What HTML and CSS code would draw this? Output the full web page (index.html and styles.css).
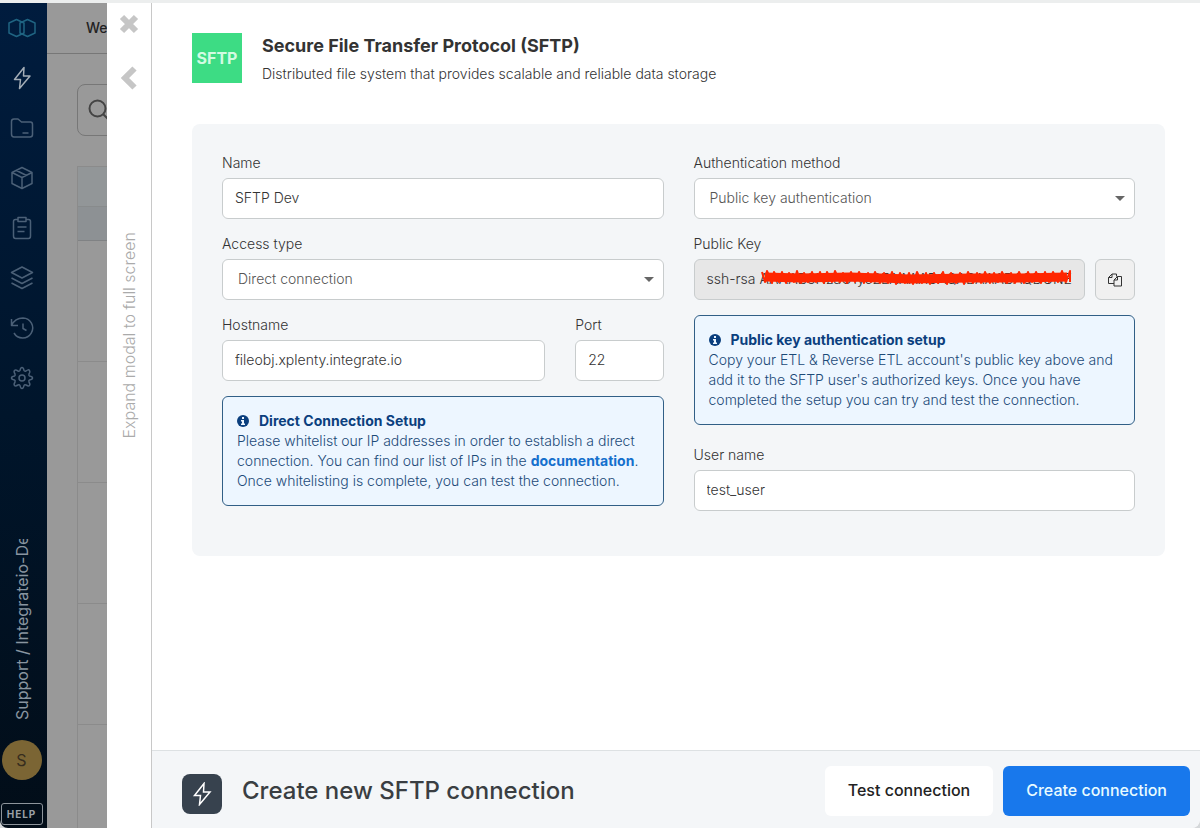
FILE: index.html
```html
<!DOCTYPE html>
<html lang="en">
<head>
  <meta charset="UTF-8">
  <meta name="viewport" content="width=device-width, initial-scale=1">
  <title>Create new SFTP connection</title>
  <link rel="stylesheet" href="styles.css">
</head>
<body>
<div class="window">
  <nav class="sidebar">
    <a href="#" class="logo" aria-label="Home">
      <svg width="28" height="20" viewBox="0 0 28 20"><path d="M8.500 1.500L16 5V15L8.500 18.500L1 15V5ZM19.500 1.500L27 5V15L19.500 18.500L12 15V5Z"/></svg>
    </a>
    <a href="#" class="active" aria-label="Connections">
      <svg width="24" height="24" viewBox="0 0 24 24"><path d="M14 1.500L4.500 13.500H10.500L9.500 22.500L20 10H13.500Z"/></svg>
    </a>
    <a href="#" aria-label="Files">
      <svg width="24" height="24" viewBox="0 0 24 24"><path d="M1.500 18V5.500Q1.500 3 4 3H8L11.500 6H20.500Q22.500 6 22.500 8.500V18.500Q22.500 21 20 21H4Q1.500 21 1.500 18ZM12.500 17H18.500"/></svg>
    </a>
    <a href="#" aria-label="Packages">
      <svg width="24" height="24" viewBox="0 0 24 24"><path d="M12 1.500L22 6.500V17.500L12 22.500L2 17.500V6.500ZM2 6.500L12 11.500L22 6.500M12 11.500V22.500M6.500 4.500L16.500 9.500"/></svg>
    </a>
    <a href="#" aria-label="Jobs">
      <svg width="24" height="24" viewBox="0 0 24 24"><path d="M8 3.500H5.500Q3.500 3.500 3.500 5.500V20Q3.500 22.500 5.500 22.500H18.500Q20.500 22.500 20.500 20V5.500Q20.500 3.500 18.500 3.500H16M8 1.500H16V5.500H8ZM7.500 11H16.500M7.500 15.500H14.500"/></svg>
    </a>
    <a href="#" aria-label="Layers">
      <svg width="24" height="24" viewBox="0 0 24 24"><path d="M12 1L22.500 6.500L12 12L1.500 6.500ZM1.500 12L12 17.500L22.500 12M1.500 17L12 22.500L22.500 17"/></svg>
    </a>
    <a href="#" aria-label="History">
      <svg width="24" height="24" viewBox="0 0 24 24"><path d="M1.500 3V9.500H8M1.500 9.500Q5 2 13 2A10 10 0 1 1 4 17M13 7.500V12.500L16.500 14.500"/></svg>
    </a>
    <a href="#" aria-label="Settings">
      <svg width="24" height="24" viewBox="0 0 24 24"><circle cx="12" cy="12" r="3"/><path d="M10 4.500Q10.500 1.500 12 1.500T14 4.500Q14.500 5.500 16 5Q18.500 3 19.500 4.500T19 8Q18.500 9.500 19.500 10Q22.500 10.500 22.500 12T19.500 14Q18.500 14.500 19 16Q20.500 18.500 19.500 19.500T16 19Q14.500 18.500 14 19.500Q13.500 22.500 12 22.500T10 19.500Q9.500 18.500 8 19Q5.500 20.500 4.500 19.500T5 16Q5.500 14.500 4.500 14Q1.500 13.500 1.500 12T4.500 10Q5.500 9.500 5 8Q3.500 5.500 4.500 4.500T8 5Q9.500 5.500 10 4.500Z"/></svg>
    </a>
    <div class="account">Support / Integrateio-Dev</div>
    <div class="avatar">S</div>
    <button class="help">HELP</button>
  </nav>

  <main class="page">
    <div class="page-header">Welcome</div>
    <div class="search">
      <svg width="24" height="24" viewBox="0 0 24 24"><circle cx="10.500" cy="10.500" r="8"/><path d="M16.500 16.500L22 22"/></svg>
    </div>
    <div class="list">
      <div class="list-head"></div>
      <div class="list-sub"></div>
      <div class="list-row"></div>
      <div class="list-row"></div>
      <div class="list-row"></div>
      <div class="list-row"></div>
      <div class="list-row"></div>
    </div>
  </main>

  <div class="modal" role="dialog" aria-labelledby="modal-title">
    <div class="modal-rail">
      <button class="icon-button" aria-label="Close">
        <svg width="20" height="20" viewBox="0 0 20 20"><path d="M3 3L17 17M17 3L3 17"/></svg>
      </button>
      <button class="icon-button back" aria-label="Back">
        <svg width="20" height="26" viewBox="0 0 20 26"><path d="M15.500 3.500L6 13L15.500 22.500"/></svg>
      </button>
      <button class="expand">Expand modal to full screen</button>
    </div>

    <div class="modal-main">
      <div class="modal-body">
        <header class="connector">
          <div class="connector-logo">SFTP</div>
          <div>
            <h1>Secure File Transfer Protocol (SFTP)</h1>
            <p>Distributed file system that provides scalable and reliable data storage</p>
          </div>
        </header>

        <form class="panel" id="connection-form">
          <div class="column">
            <div class="field">
              <label for="name">Name</label>
              <input id="name" type="text" value="SFTP Dev">
            </div>
            <div class="field">
              <label for="access">Access type</label>
              <select id="access"><option>Direct connection</option></select>
            </div>
            <div class="field-row">
              <div class="field host">
                <label for="host">Hostname</label>
                <input id="host" type="text" value="fileobj.xplenty.integrate.io">
              </div>
              <div class="field port">
                <label for="port">Port</label>
                <input id="port" type="text" value="22">
              </div>
            </div>
            <div class="info">
              <strong class="info-title">
                <svg width="12" height="12" viewBox="0 0 12 12"><circle cx="6" cy="6" r="6"/><path d="M5 2H7V4H5ZM4 5H7V8.500H8V10H4V8.500H5V6.500H4Z"/></svg>
                Direct Connection Setup
              </strong>
              Please whitelist our IP addresses in order to establish a direct connection. You can find our list of IPs in the <a href="#">documentation</a>. Once whitelisting is complete, you can test the connection.
            </div>
          </div>

          <div class="column">
            <div class="field">
              <label for="auth">Authentication method</label>
              <select id="auth"><option>Public key authentication</option></select>
            </div>
            <div class="field">
              <label for="key">Public Key</label>
              <div class="key-row">
                <div class="key-box">
                  <input id="key" type="text" readonly value="ssh-rsa AAAAB3NzaC1yc2EAAAADAQABAAABAQDUNEL">
                  <svg class="redaction" viewBox="0 0 312 20"><path class="thick" d="M5 9L40 10L90 9L150 11L210 10L260 10L307 9"/><path d="M2 4L5 14L7 3L12 15L14 4L19 14L22 4L26 15L29 5L34 14L37 3L41 15L44 5L48 14L52 4L56 14L60 4L64 15L67 4L72 14L75 3L80 14L83 5L87 15L91 4L95 14L99 4L104 15L108 5L111 14L115 4L120 15L124 5L128 15L132 4L136 16L140 5L145 15L149 5L153 16L157 4L162 15L166 5L170 16L174 5L178 15L183 4L187 16L191 5L196 15L200 5L204 16L208 4L213 15L217 5L221 15L225 4L230 15L234 5L238 14L242 4L247 15L251 5L255 15L259 4L264 15L268 4L272 14L276 4L281 15L285 4L289 14L293 4L298 14L302 3L306 14L310 3V14"/></svg>
                </div>
                <button type="button" class="copy" aria-label="Copy public key">
                  <svg width="16" height="16" viewBox="0 0 16 16"><path d="M7 11.500H1.500V5.500L5 2H9.500V4.500M5 2V5.500H1.500M7 14V8L10.500 4.500H14.500V14ZM10.500 4.500V8H7"/></svg>
                </button>
              </div>
            </div>
            <div class="info">
              <strong class="info-title">
                <svg width="12" height="12" viewBox="0 0 12 12"><circle cx="6" cy="6" r="6"/><path d="M5 2H7V4H5ZM4 5H7V8.500H8V10H4V8.500H5V6.500H4Z"/></svg>
                Public key authentication setup
              </strong>
              Copy your ETL &amp; Reverse ETL account's public key above and add it to the SFTP user's authorized keys. Once you have completed the setup you can try and test the connection.
            </div>
            <div class="field user">
              <label for="user">User name</label>
              <input id="user" type="text" value="test_user">
            </div>
          </div>
        </form>
      </div>

      <footer class="modal-footer">
        <div class="footer-icon">
          <svg width="24" height="24" viewBox="0 0 24 24"><path d="M14 1.500L4.500 13.500H10.500L9.500 22.500L20 10H13.500Z"/></svg>
        </div>
        <h2 id="modal-title">Create new SFTP connection</h2>
        <button type="button" class="btn">Test connection</button>
        <button type="submit" form="connection-form" class="btn primary">Create connection</button>
      </footer>
    </div>
  </div>
</div>
</body>
</html>
```

FILE: styles.css
```css
* {
  box-sizing: border-box;
}
body {
  margin: 0;
  background: #d5d8da;
  font-family: Inter, "Liberation Sans", sans-serif;
  font-size: 14px;
  font-weight: 300;
  line-height: 20px;
  color: #333;
}
button, input, select {
  font: inherit;
  color: inherit;
}
button {
  border: 0;
  padding: 0;
  background: none;
  cursor: pointer;
}
svg {
  display: block;
  fill: none;
  stroke: currentColor;
}
.window {
  position: relative;
  display: flex;
  height: 100vh;
  border-top: 3px solid #eceeee;
  border-radius: 0 0 8px 8px;
  overflow: hidden;
}

/* left navigation */
.sidebar {
  display: flex;
  flex-direction: column;
  align-items: center;
  width: 47px;
  padding: 0 4px 3px 0;
  background: linear-gradient(#001c3e, #00152b 50%, #020d18);
  color: #4b6077;
}
.sidebar a {
  display: flex;
  align-items: center;
  justify-content: center;
  flex: none;
  width: 43px;
  height: 50px;
  color: inherit;
}
.sidebar .logo {
  color: #1f6482;
}
.sidebar .active {
  color: #a3adb6;
}
.sidebar svg {
  stroke-width: 1.5;
  stroke-linejoin: round;
}
.account {
  height: 181px;
  margin-top: auto;
  writing-mode: vertical-rl;
  transform: rotate(180deg);
  overflow: hidden;
  white-space: nowrap;
  font-size: 16px;
  font-weight: 400;
  color: #8995a0;
}
.avatar {
  flex: none;
  width: 40px;
  margin: 20px 0 23px;
  border-radius: 50%;
  background: #7b6534;
  font-size: 16px;
  font-weight: 400;
  line-height: 40px;
  text-align: center;
  color: #362d1e;
}
.help {
  flex: none;
  width: 42px;
  height: 22px;
  border: 1px solid #8d949b;
  border-radius: 3px;
  font-size: 10px;
  font-weight: 700;
  letter-spacing: 1px;
  color: #9aa0a6;
}

/* dimmed page behind the modal */
.page {
  flex: 1;
  overflow: hidden;
  background: #999;
}
.page-header {
  height: 51px;
  padding-left: 39px;
  border-bottom: 1px solid #777;
  font-weight: 500;
  line-height: 50px;
  color: #222;
}
.search {
  display: flex;
  align-items: center;
  height: 52px;
  margin: 30px;
  padding-left: 9px;
  border: 1px solid #777;
  border-radius: 8px;
  color: #444;
}
.search svg {
  stroke-width: 2;
}
.list {
  margin: 0 30px;
  border: 1px solid #8b8b8b;
}
.list-head {
  height: 40px;
  background: #929698;
  border-bottom: 1px solid #888b8c;
}
.list-sub {
  height: 34px;
  background: #8d9194;
  border-bottom: 1px solid #808284;
}
.list-row {
  height: 121px;
  border-bottom: 1px solid #8b8b8b;
}

/* modal */
.modal {
  position: absolute;
  top: 0;
  right: 0;
  bottom: 0;
  left: 107px;
  display: flex;
  background: #fff;
}
.modal-rail {
  display: flex;
  flex-direction: column;
  align-items: center;
  width: 45px;
  padding-top: 11px;
  border-right: 1px solid #c8c8c8;
  color: #c6c6c6;
}
.icon-button svg {
  stroke-width: 6;
}
.back {
  margin-top: 31px;
}
.expand {
  margin-top: 141px;
  writing-mode: vertical-rl;
  transform: rotate(180deg);
  font-size: 16px;
  color: #aaa;
}
.modal-main {
  display: flex;
  flex: 1;
  flex-direction: column;
}
.modal-body {
  flex: 1;
  padding: 30px 35px 30px 40px;
}
.connector {
  display: flex;
  align-items: flex-start;
  gap: 20px;
  margin-bottom: 40px;
}
.connector-logo {
  width: 50px;
  background: #3ddc84;
  font-size: 16px;
  font-weight: 700;
  line-height: 50px;
  text-align: center;
  color: #d2fbe2;
}
h1, h2, p {
  margin: 0;
}
h1 {
  font-size: 18px;
  font-weight: 700;
  line-height: 26px;
}
.connector p {
  margin-top: 5px;
}
.panel {
  display: grid;
  grid-template-columns: 1fr 1fr;
  gap: 30px;
  padding: 29px 30px 45px;
  border-radius: 8px;
  background: #f4f6f8;
}
.column {
  display: flex;
  flex-direction: column;
  gap: 15px;
}
.field {
  display: flex;
  flex-direction: column;
  gap: 5px;
  min-width: 0;
}
.field-row {
  display: flex;
  gap: 30px;
}
.host {
  flex: 1;
}
.port {
  width: 20%;
}
.user {
  margin-top: 5px;
}
input, select {
  width: 100%;
  height: 41px;
  padding: 0 12px 2px;
  border: 1px solid #c8cccd;
  border-radius: 6px;
  background: #fff;
}
select {
  appearance: none;
  padding: 0 15px 2px;
  background: #fff url("data:image/svg+xml,%3Csvg xmlns='http://www.w3.org/2000/svg' width='10' height='5'%3E%3Cpath d='M0 0H10L5 5Z' fill='%23666'/%3E%3C/svg%3E") no-repeat right 9px center;
  color: #555;
}
.key-row {
  display: flex;
  gap: 10px;
}
.key-box {
  position: relative;
  flex: 1;
}
.key-box input {
  background: #e7e7e7;
}
/* red scribble over the key */
.redaction {
  position: absolute;
  top: 9px;
  right: 13px;
  width: 312px;
  height: 20px;
  color: #ff2600;
  stroke-width: 2;
  stroke-linejoin: round;
}
.redaction .thick {
  stroke-width: 9;
}
.copy {
  display: flex;
  align-items: center;
  justify-content: center;
  width: 40px;
  border: 1px solid #c8cccd;
  border-radius: 6px;
  background: #f0f0f0;
}
.info {
  padding: 14px;
  border: 1px solid #315f86;
  border-radius: 6px;
  background: #edf6ff;
  color: #1c4a78;
}
.info-title {
  display: flex;
  align-items: center;
  gap: 10px;
  font-weight: 700;
  color: #0b3f7e;
}
.info svg {
  fill: #0b3f7e;
  stroke: none;
}
.info svg path {
  fill: #edf6ff;
}
.info a {
  font-weight: 700;
  text-decoration: none;
  color: #1570cd;
}

.modal-footer {
  display: flex;
  gap: 10px;
  padding: 15px 10px 12px 30px;
  border-top: 1px solid #dde1e3;
  background: #f4f6f8;
}
.footer-icon {
  display: flex;
  align-items: center;
  justify-content: center;
  align-self: flex-end;
  width: 40px;
  height: 40px;
  margin: 0 10px 2px 0;
  border-radius: 8px;
  background: #37424e;
  color: #fff;
}
.footer-icon svg {
  stroke-width: 1.5;
}
h2 {
  flex: 1;
  font-size: 24px;
  font-weight: 500;
  line-height: 50px;
  color: #3a3e42;
}
.btn {
  padding: 0 23px 2px;
  border-radius: 6px;
  background: #fff;
  font-size: 16px;
  font-weight: 500;
  line-height: 48px;
  color: #222;
}
.primary {
  background: #1878ec;
  color: #e8fbff;
}
```
